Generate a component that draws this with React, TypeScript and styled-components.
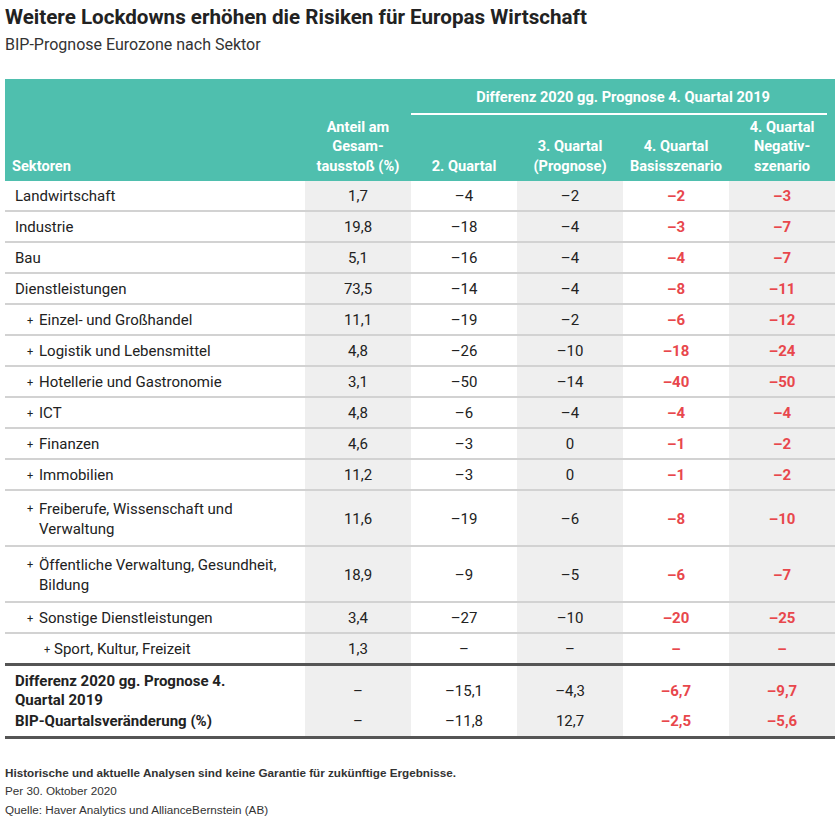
import React from "react";
import styled, { createGlobalStyle } from "styled-components";

const Global = createGlobalStyle`
  html, body { margin: 0; padding: 0; background: #fff; }
  body { font-family: Roboto, "Noto Sans", sans-serif; color: #222; }
`;

const Page = styled.div`
  padding: 4px 5px 0 5px;
  width: 830px;
`;

const Title = styled.h1`
  margin: 0;
  font-size: 20.6px;
  line-height: 26px;
  font-weight: 700;
  color: #222;
`;

const Subtitle = styled.h2`
  margin: 4px 0 0 0;
  font-size: 16px;
  line-height: 22px;
  font-weight: 400;
  color: #333;
`;

const Table = styled.table`
  margin-top: 23px;
  width: 830px;
  border-collapse: collapse;
  table-layout: fixed;
  font-size: 15px;
`;

const HeadRow = styled.tr`
  background: #4fbfae;
`;

const Th = styled.th<{ $left?: boolean }>`
  color: #fff;
  font-weight: 700;
  font-size: 14.6px;
  line-height: 19.5px;
  text-align: ${(p) => (p.$left ? "left" : "center")};
  vertical-align: bottom;
  padding: ${(p) => (p.$left ? "0 6px 5px 7px" : "0 2px 5px 2px")};
`;

const GroupTh = styled.th`
  padding: 9px 8px 0 0;
  color: #fff;
  font-weight: 700;
  font-size: 14.6px;
  line-height: 19px;
  text-align: center;
`;

const GroupLabel = styled.div`
  padding-left: 8px;
  padding-bottom: 6px;
  border-bottom: 2px solid #fff;
`;

const SubHeadRow = styled.tr`
  background: #4fbfae;
  height: 66px;
`;

const Row = styled.tr<{ $thick?: boolean }>`
  border-top: 2px solid #d2d2d2;
  ${(p) => (p.$thick ? "border-bottom: 3px solid #555;" : "")}
  &:first-of-type { border-top: none; }
`;

const Td = styled.td<{ $gray?: boolean; $red?: boolean; $tall?: boolean }>`
  background: ${(p) => (p.$gray ? "#efefef" : "#fff")};
  color: ${(p) => (p.$red ? "#e8474c" : "#222")};
  font-weight: ${(p) => (p.$red ? 700 : 400)};
  text-align: center;
  line-height: ${(p) => (p.$tall ? "20px" : "19px")};
  padding: ${(p) => (p.$tall ? "8px 4px 6px" : "6px 4px 4px")};
  vertical-align: middle;
`;

const NameTd = styled.td<{ $tall?: boolean; $level: number }>`
  text-align: left;
  color: #222;
  line-height: ${(p) => (p.$tall ? "20px" : "19px")};
  padding: ${(p) => (p.$tall ? "8px 4px 6px 10px" : "6px 4px 4px 10px")};
  padding-left: ${(p) => (p.$level === 0 ? 10 : p.$level === 1 ? 22 : 39)}px;
`;

const Hanging = styled.div`
  display: flex;
`;

const Plus = styled.span<{ $w: number }>`
  flex: 0 0 auto;
  width: ${(p) => p.$w}px;
  font-size: 11px;
`;

const SumTd = styled.td<{ $gray?: boolean; $red?: boolean; $pos: "a" | "b" }>`
  background: ${(p) => (p.$gray ? "#efefef" : "#fff")};
  color: ${(p) => (p.$red ? "#e8474c" : "#222")};
  font-weight: ${(p) => (p.$red ? 700 : 400)};
  text-align: center;
  line-height: 19px;
  padding: ${(p) => (p.$pos === "a" ? "6px 4px 1px 4px" : "1px 4px 5px 4px")};
`;

const SumName = styled.td<{ $pos: "a" | "b" }>`
  font-weight: 700;
  text-align: left;
  line-height: 19px;
  padding: ${(p) => (p.$pos === "a" ? "6px 4px 1px 10px" : "1px 4px 5px 10px")};
`;

const SumBody = styled.tbody`
  border-top: 3px solid #555;
  border-bottom: 3px solid #555;
`;

const Footer = styled.div`
  margin-top: 25px;
  font-family: "Liberation Sans", Arial, sans-serif;
  font-size: 11.7px;
  line-height: 18.3px;
  color: #333;
`;

const FootBold = styled.div`
  font-weight: 700;
`;

type R = { name: string; level: number; v: string[]; tall?: boolean };

const rows: R[] = [
  { name: "Landwirtschaft", level: 0, v: ["1,7", "–4", "–2", "–2", "–3"] },
  { name: "Industrie", level: 0, v: ["19,8", "–18", "–4", "–3", "–7"] },
  { name: "Bau", level: 0, v: ["5,1", "–16", "–4", "–4", "–7"] },
  { name: "Dienstleistungen", level: 0, v: ["73,5", "–14", "–4", "–8", "–11"] },
  { name: "Einzel- und Großhandel", level: 1, v: ["11,1", "–19", "–2", "–6", "–12"] },
  { name: "Logistik und Lebensmittel", level: 1, v: ["4,8", "–26", "–10", "–18", "–24"] },
  { name: "Hotellerie und Gastronomie", level: 1, v: ["3,1", "–50", "–14", "–40", "–50"] },
  { name: "ICT", level: 1, v: ["4,8", "–6", "–4", "–4", "–4"] },
  { name: "Finanzen", level: 1, v: ["4,6", "–3", "0", "–1", "–2"] },
  { name: "Immobilien", level: 1, v: ["11,2", "–3", "0", "–1", "–2"] },
  { name: "Freiberufe, Wissenschaft und Verwaltung", level: 1, tall: true, v: ["11,6", "–19", "–6", "–8", "–10"] },
  { name: "Öffentliche Verwaltung, Gesundheit, Bildung", level: 1, tall: true, v: ["18,9", "–9", "–5", "–6", "–7"] },
  { name: "Sonstige Dienstleistungen", level: 1, v: ["3,4", "–27", "–10", "–20", "–25"] },
  { name: "Sport, Kultur, Freizeit", level: 2, v: ["1,3", "–", "–", "–", "–"] },
];

const sums = [
  { name: "Differenz 2020 gg. Prognose 4. Quartal 2019", v: ["–", "–15,1", "–4,3", "–6,7", "–9,7"] },
  { name: "BIP-Quartalsveränderung (%)", v: ["–", "–11,8", "12,7", "–2,5", "–5,6"] },
];

const isGray = (j: number) => j === 0 || j === 2 || j === 4;

export default function App() {
  return (
    <Page>
      <Global />
      <Title>Weitere Lockdowns erhöhen die Risiken für Europas Wirtschaft</Title>
      <Subtitle>BIP-Prognose Eurozone nach Sektor</Subtitle>
      <Table>
        <colgroup>
          <col style={{ width: 300 }} />
          <col style={{ width: 106 }} />
          <col style={{ width: 106 }} />
          <col style={{ width: 106 }} />
          <col style={{ width: 106 }} />
          <col style={{ width: 106 }} />
        </colgroup>
        <thead>
          <HeadRow>
            <Th $left rowSpan={2}>Sektoren</Th>
            <Th rowSpan={2}>
              Anteil am
              <br />
              Gesam-
              <br />
              tausstoß (%)
            </Th>
            <GroupTh colSpan={4}>
              <GroupLabel>Differenz 2020 gg. Prognose 4. Quartal 2019</GroupLabel>
            </GroupTh>
          </HeadRow>
          <SubHeadRow>
            <Th>2. Quartal</Th>
            <Th>
              3. Quartal
              <br />
              (Prognose)
            </Th>
            <Th>
              4. Quartal
              <br />
              Basisszenario
            </Th>
            <Th>
              4. Quartal
              <br />
              Negativ-
              <br />
              szenario
            </Th>
          </SubHeadRow>
        </thead>
        <tbody>
          {rows.map((r, i) => (
            <Row key={i} $thick={i === rows.length - 1}>
              <NameTd $tall={r.tall} $level={r.level}>
                {r.level === 0 ? (
                  r.name
                ) : (
                  <Hanging>
                    <Plus $w={r.level === 1 ? 12 : 10}>+</Plus>
                    <span>{r.name}</span>
                  </Hanging>
                )}
              </NameTd>
              {r.v.map((x, j) => (
                <Td key={j} $tall={r.tall} $gray={isGray(j)} $red={j >= 3}>
                  {x}
                </Td>
              ))}
            </Row>
          ))}
        </tbody>
        <SumBody>
          {sums.map((s, i) => {
            const pos = i === 0 ? "a" : "b";
            return (
              <tr key={i}>
                <SumName $pos={pos}>
                  {i === 0 ? (
                    <>
                      Differenz 2020 gg. Prognose 4.
                      <br />
                      Quartal 2019
                    </>
                  ) : (
                    s.name
                  )}
                </SumName>
                {s.v.map((x, j) => (
                  <SumTd key={j} $pos={pos} $gray={isGray(j)} $red={j >= 3}>
                    {x}
                  </SumTd>
                ))}
              </tr>
            );
          })}
        </SumBody>
      </Table>
      <Footer>
        <FootBold>Historische und aktuelle Analysen sind keine Garantie für zukünftige Ergebnisse.</FootBold>
        <div>Per 30. Oktober 2020</div>
        <div>Quelle: Haver Analytics und AllianceBernstein (AB)</div>
      </Footer>
    </Page>
  );
}
